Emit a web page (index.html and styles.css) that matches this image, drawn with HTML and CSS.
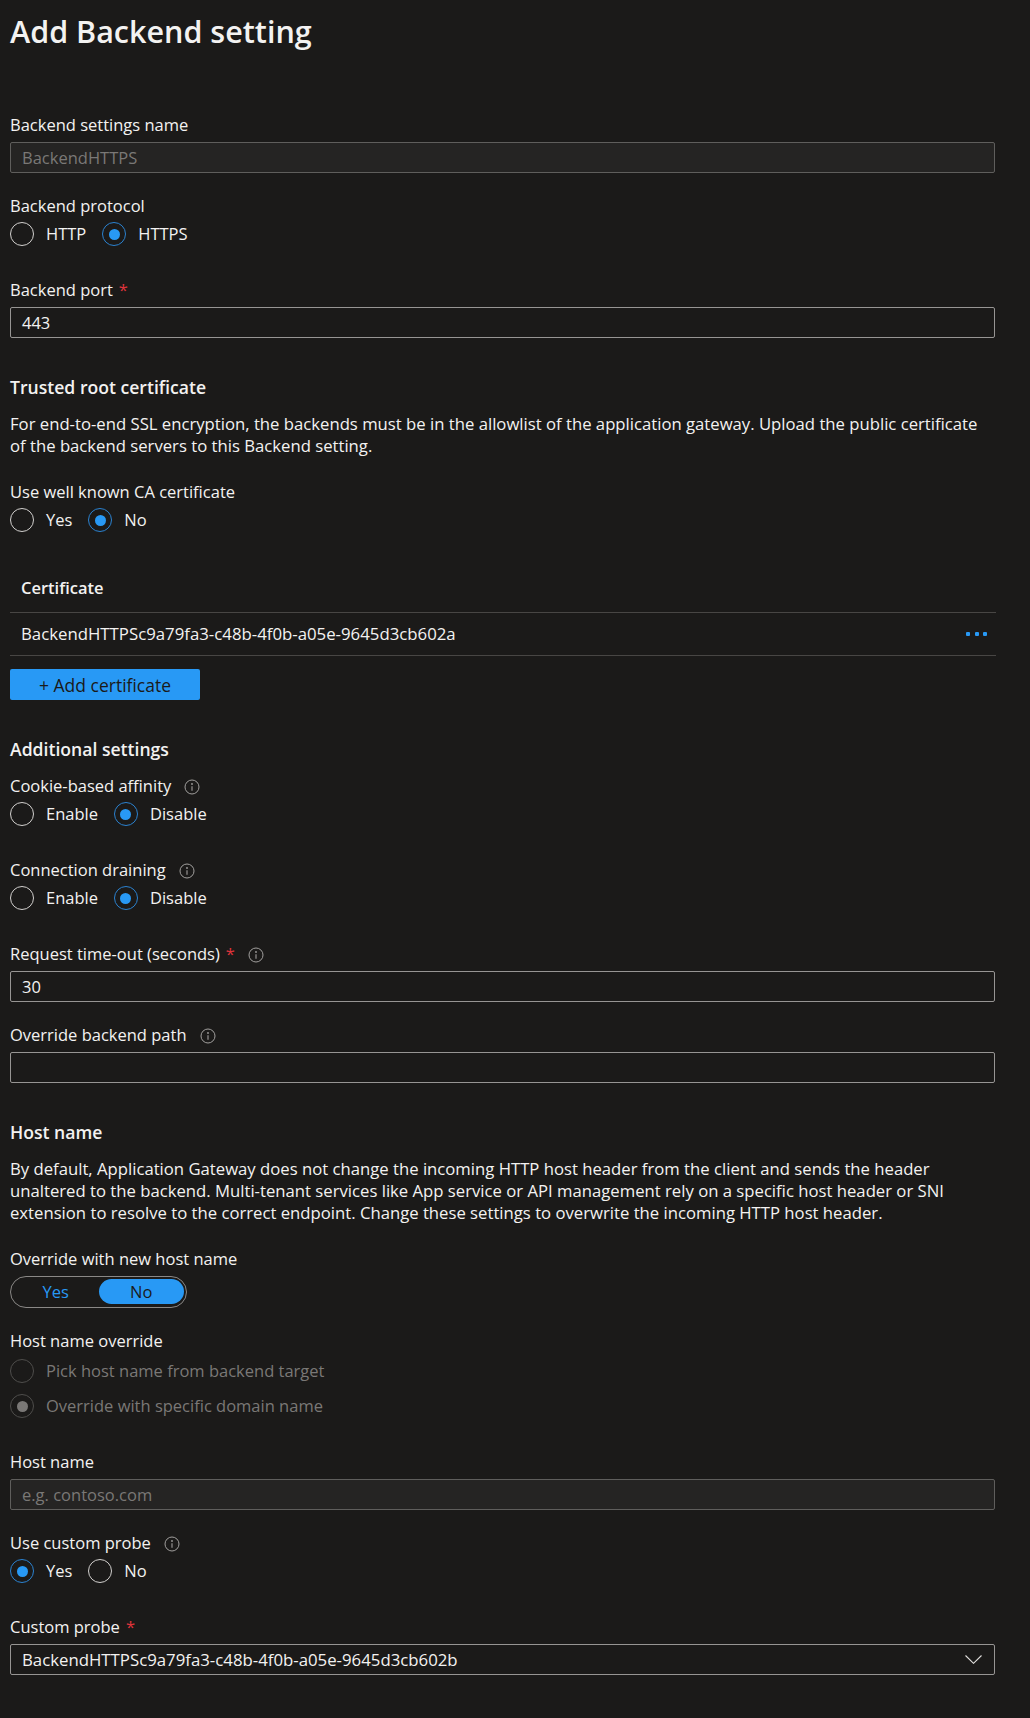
FILE: index.html
```html
<!DOCTYPE html>
<html lang="en">
<head>
<meta charset="utf-8">
<title>Add Backend setting</title>
<link rel="stylesheet" href="styles.css">
</head>
<body>
<main class="page">
  <h1 class="title">Add Backend setting</h1>

  <div class="field first">
    <div class="label">Backend settings name</div>
    <div class="input disabled">BackendHTTPS</div>
  </div>

  <div class="field">
    <div class="label">Backend protocol</div>
    <div class="radios">
      <span class="radio"><span class="dot"></span>HTTP</span>
      <span class="radio checked"><span class="dot"></span>HTTPS</span>
    </div>
  </div>

  <div class="field loose">
    <div class="label">Backend port <span class="req">*</span></div>
    <div class="input">443</div>
  </div>

  <h2 class="section-head">Trusted root certificate</h2>
  <p class="desc">For end-to-end SSL encryption, the backends must be in the allowlist of the application gateway. Upload the public certificate of the backend servers to this Backend setting.</p>

  <div class="field">
    <div class="label">Use well known CA certificate</div>
    <div class="radios">
      <span class="radio"><span class="dot"></span>Yes</span>
      <span class="radio checked"><span class="dot"></span>No</span>
    </div>
  </div>

  <div class="cert-table">
    <div class="cert-head">Certificate</div>
    <div class="cert-row">
      <span class="guid">BackendHTTPSc9a79fa3-c48b-4f0b-a05e-9645d3cb602a</span>
      <span class="more"><i></i><i></i><i></i></span>
    </div>
  </div>
  <button class="btn">+ Add certificate</button>

  <h2 class="section-head">Additional settings</h2>

  <div class="field">
    <div class="label">Cookie-based affinity <svg class="info" width="16" height="16" viewBox="0 0 16 16"><circle cx="8" cy="8" r="7" fill="none" stroke="#a19f9d"/><circle cx="8" cy="5" r="0.9" fill="#a19f9d"/><path d="M8 7.2v4.6" stroke="#a19f9d" stroke-width="1.1"/></svg></div>
    <div class="radios">
      <span class="radio"><span class="dot"></span>Enable</span>
      <span class="radio checked"><span class="dot"></span>Disable</span>
    </div>
  </div>

  <div class="field loose">
    <div class="label">Connection draining <svg class="info" width="16" height="16" viewBox="0 0 16 16"><circle cx="8" cy="8" r="7" fill="none" stroke="#a19f9d"/><circle cx="8" cy="5" r="0.9" fill="#a19f9d"/><path d="M8 7.2v4.6" stroke="#a19f9d" stroke-width="1.1"/></svg></div>
    <div class="radios">
      <span class="radio"><span class="dot"></span>Enable</span>
      <span class="radio checked"><span class="dot"></span>Disable</span>
    </div>
  </div>

  <div class="field loose">
    <div class="label">Request time-out (seconds) <span class="req">*</span> <svg class="info" width="16" height="16" viewBox="0 0 16 16"><circle cx="8" cy="8" r="7" fill="none" stroke="#a19f9d"/><circle cx="8" cy="5" r="0.9" fill="#a19f9d"/><path d="M8 7.2v4.6" stroke="#a19f9d" stroke-width="1.1"/></svg></div>
    <div class="input">30</div>
  </div>

  <div class="field">
    <div class="label">Override backend path <svg class="info" width="16" height="16" viewBox="0 0 16 16"><circle cx="8" cy="8" r="7" fill="none" stroke="#a19f9d"/><circle cx="8" cy="5" r="0.9" fill="#a19f9d"/><path d="M8 7.2v4.6" stroke="#a19f9d" stroke-width="1.1"/></svg></div>
    <div class="input"></div>
  </div>

  <h2 class="section-head">Host name</h2>
  <p class="desc">By default, Application Gateway does not change the incoming HTTP host header from the client and sends the header unaltered to the backend. Multi-tenant services like App service or API management rely on a specific host header or SNI extension to resolve to the correct endpoint. Change these settings to overwrite the incoming HTTP host header.</p>

  <div class="field">
    <div class="label">Override with new host name</div>
    <div class="toggle">
      <span class="seg">Yes</span>
      <span class="seg on">No</span>
    </div>
  </div>

  <div class="field">
    <div class="label">Host name override</div>
    <div class="radio-list">
      <span class="radio off"><span class="dot"></span>Pick host name from backend target</span>
      <span class="radio off checked"><span class="dot"></span>Override with specific domain name</span>
    </div>
  </div>

  <div class="field loose">
    <div class="label">Host name</div>
    <div class="input disabled placeholder">e.g. contoso.com</div>
  </div>

  <div class="field">
    <div class="label">Use custom probe <svg class="info" width="16" height="16" viewBox="0 0 16 16"><circle cx="8" cy="8" r="7" fill="none" stroke="#a19f9d"/><circle cx="8" cy="5" r="0.9" fill="#a19f9d"/><path d="M8 7.2v4.6" stroke="#a19f9d" stroke-width="1.1"/></svg></div>
    <div class="radios">
      <span class="radio checked"><span class="dot"></span>Yes</span>
      <span class="radio"><span class="dot"></span>No</span>
    </div>
  </div>

  <div class="field loose">
    <div class="label">Custom probe <span class="req">*</span></div>
    <div class="input select">
      <span class="guid">BackendHTTPSc9a79fa3-c48b-4f0b-a05e-9645d3cb602b</span>
      <svg class="chev" width="17" height="9" viewBox="0 0 17 9"><path d="M0.5 0.5L8.5 8.3L16.5 0.5" fill="none" stroke="#e1dfdd" stroke-width="1.1"/></svg>
    </div>
  </div>
</main>
</body>
</html>
```

FILE: styles.css
```css
* { box-sizing: border-box; }

html, body {
  margin: 0;
  background: #1b1a19;
}

body {
  color: #f3f2f1;
  font-family: "Open Sans", "Noto Sans", "DejaVu Sans", sans-serif;
  font-size: 16.5px;
  line-height: 22px;
}

.page {
  width: 1030px;
  padding: 11px 35px 40px 10px;
  display: flex;
  flex-direction: column;
  align-items: stretch;
}

.title {
  margin: 0;
  font-size: 30.5px;
  line-height: 40px;
  font-weight: 600;
  color: #f3f2f1;
}

.field {
  margin-top: 23px;
  display: flex;
  flex-direction: column;
}
.field.first { margin-top: 64px; }
.field.loose { margin-top: 34px; }

.label {
  display: flex;
  align-items: center;
  height: 22px;
  padding-bottom: 3px;
}
.req {
  color: #e0343c;
  margin-left: 6px;
}
.info {
  margin-left: 13px;
  flex: none;
  position: relative;
  top: 1px;
}
.req + .info { margin-left: 13px; }

.guid { font-size: 16.8px; }

.input {
  margin-top: 5px;
  height: 31px;
  border: 1px solid #979593;
  border-radius: 2px;
  padding: 0 11px;
  display: flex;
  align-items: center;
  color: #f3f2f1;
}
.input.disabled {
  background: #252423;
  border-color: #5f5e5c;
  color: #7a7876;
}

.select {
  justify-content: space-between;
  padding-right: 12px;
}
.chev { flex: none; }

.radios {
  margin-top: 4px;
  display: flex;
  gap: 16px;
  height: 24px;
}
.radio {
  display: inline-flex;
  align-items: center;
  height: 24px;
}
.radio .dot {
  width: 24px;
  height: 24px;
  border-radius: 50%;
  border: 1px solid #d2d0ce;
  margin-right: 12px;
  display: inline-flex;
  align-items: center;
  justify-content: center;
  flex: none;
}
.radio.checked .dot {
  border-color: #2b82d0;
}
.radio.checked .dot::after {
  content: "";
  width: 11px;
  height: 11px;
  border-radius: 50%;
  background: #2899f5;
}

.radio-list {
  margin-top: 6px;
  display: flex;
  flex-direction: column;
  gap: 11px;
}
.radio.off { color: #7a7876; }
.radio.off .dot { border-color: #4e4d4b; }
.radio.off.checked .dot { border-color: #4e4d4b; }
.radio.off.checked .dot::after { background: #7a7876; }

.section-head {
  margin: 38px 0 0;
  font-size: 17.6px;
  line-height: 22px;
  font-weight: 600;
  padding-bottom: 2px;
  height: 22px;
}
.section-head + .field { margin-top: 16px; }

.desc {
  margin: 15px 0 0;
  font-size: 16.7px;
}
.desc + .field { margin-top: 25px; }

.cert-table {
  margin-top: 45px;
  display: flex;
  flex-direction: column;
}
.cert-head {
  font-weight: 600;
  padding: 0 0 13px 11px;
  border-bottom: 1px solid #484644;
  width: 986px;
}
.cert-row {
  width: 986px;
  height: 43px;
  padding: 0 9px 0 11px;
  border-bottom: 1px solid #484644;
  display: flex;
  align-items: center;
  justify-content: space-between;
}
.more {
  display: flex;
  gap: 4.5px;
}
.more i {
  width: 4px;
  height: 4px;
  background: #2899f5;
  border-radius: 1px;
}

.btn {
  margin-top: 13px;
  align-self: flex-start;
  width: 190px;
  height: 31px;
  border: none;
  border-radius: 2px;
  background: #2899f5;
  color: #1b1a19;
  font-family: inherit;
  font-size: 17.5px;
  line-height: 22px;
  padding: 0;
}

.toggle {
  margin-top: 5px;
  align-self: flex-start;
  width: 177px;
  height: 32px;
  border: 1px solid #8a8886;
  border-radius: 16px;
  padding: 2px 2px 3px 2px;
  display: flex;
}
.seg {
  flex: 1;
  display: flex;
  align-items: center;
  justify-content: center;
  color: #2899f5;
  border-radius: 13px;
}
.seg.on {
  background: #2899f5;
  color: #1b1a19;
}
```
